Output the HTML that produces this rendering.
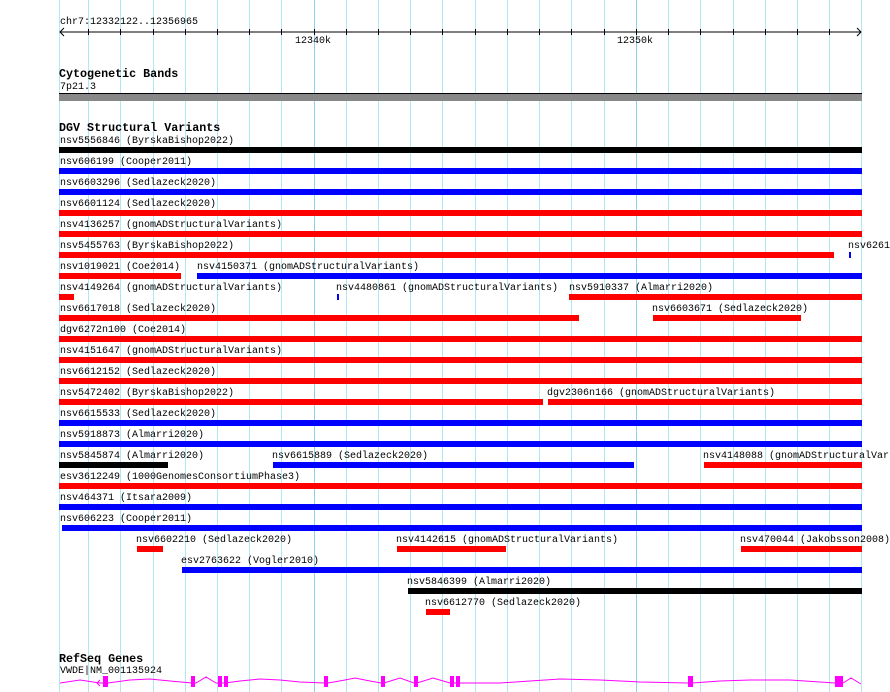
<!DOCTYPE html>
<html><head><meta charset="utf-8"><style>
html,body{margin:0;padding:0;background:#fff;}
body{width:890px;height:692px;position:relative;overflow:hidden;font-family:"Liberation Mono","DejaVu Sans Mono",monospace;font-size:10px;color:#000;}
.g{position:absolute;top:0;height:692px;width:1px;background:#b0e8f2;}
.gm{background:#8dd2ec;}
.t{position:absolute;white-space:nowrap;line-height:10px;margin-top:2px;}
.b{position:absolute;height:6px;}
.r{background:#f00;}.u{background:#00f;}.k{background:#000;}
.h{font-weight:bold;font-size:11.7px;}
</style></head><body>
<div class="g" style="left:59px"></div><div class="g" style="left:88px"></div><div class="g" style="left:120px"></div><div class="g" style="left:153px"></div><div class="g" style="left:185px"></div><div class="g" style="left:217px"></div><div class="g" style="left:249px"></div><div class="g" style="left:281px"></div><div class="g gm" style="left:314px"></div><div class="g" style="left:346px"></div><div class="g" style="left:378px"></div><div class="g" style="left:410px"></div><div class="g" style="left:442px"></div><div class="g" style="left:475px"></div><div class="g" style="left:507px"></div><div class="g" style="left:539px"></div><div class="g" style="left:571px"></div><div class="g" style="left:604px"></div><div class="g gm" style="left:636px"></div><div class="g" style="left:668px"></div><div class="g" style="left:700px"></div><div class="g" style="left:733px"></div><div class="g" style="left:765px"></div><div class="g" style="left:797px"></div><div class="g" style="left:829px"></div><div class="g" style="left:861px"></div>

<svg style="position:absolute;left:0;top:0" width="890" height="60">
<line x1="60" y1="32" x2="861" y2="32" stroke="#000"/>
<polyline points="64,28 60,32 64,36" fill="none" stroke="#000"/>
<polyline points="857,28 861,32 857,36" fill="none" stroke="#000"/>
<g stroke="#000">
<line x1="88.5" y1="29" x2="88.5" y2="35"/><line x1="120.5" y1="29" x2="120.5" y2="35"/><line x1="153.5" y1="29" x2="153.5" y2="35"/><line x1="185.5" y1="29" x2="185.5" y2="35"/><line x1="217.5" y1="29" x2="217.5" y2="35"/><line x1="249.5" y1="29" x2="249.5" y2="35"/><line x1="281.5" y1="29" x2="281.5" y2="35"/><line x1="314.5" y1="29" x2="314.5" y2="35"/><line x1="346.5" y1="29" x2="346.5" y2="35"/><line x1="378.5" y1="29" x2="378.5" y2="35"/><line x1="410.5" y1="29" x2="410.5" y2="35"/><line x1="442.5" y1="29" x2="442.5" y2="35"/><line x1="475.5" y1="29" x2="475.5" y2="35"/><line x1="507.5" y1="29" x2="507.5" y2="35"/><line x1="539.5" y1="29" x2="539.5" y2="35"/><line x1="571.5" y1="29" x2="571.5" y2="35"/><line x1="604.5" y1="29" x2="604.5" y2="35"/><line x1="636.5" y1="29" x2="636.5" y2="35"/><line x1="668.5" y1="29" x2="668.5" y2="35"/><line x1="700.5" y1="29" x2="700.5" y2="35"/><line x1="733.5" y1="29" x2="733.5" y2="35"/><line x1="765.5" y1="29" x2="765.5" y2="35"/><line x1="797.5" y1="29" x2="797.5" y2="35"/><line x1="829.5" y1="29" x2="829.5" y2="35"/>
</g></svg>
<div class="t" style="left:60px;top:16px">chr7:12332122..12356965</div>
<div class="t" style="left:295px;top:35px">12340k</div>
<div class="t" style="left:617px;top:35px">12350k</div>

<div class="t h" style="left:59px;top:67px">Cytogenetic Bands</div>
<div class="t" style="left:60px;top:81px">7p21.3</div>
<div style="position:absolute;left:59px;top:93px;width:803px;height:7px;background:#888;border-top:1px solid #000;"></div>

<div class="t h" style="left:59px;top:121px">DGV Structural Variants</div>

<div class="t" style="left:60px;top:135px">nsv5556846 (ByrskaBishop2022)</div><div class="b k" style="left:59px;top:147px;width:803px"></div>
<div class="t" style="left:60px;top:156px">nsv606199 (Cooper2011)</div><div class="b u" style="left:59px;top:168px;width:803px"></div>
<div class="t" style="left:60px;top:177px">nsv6603296 (Sedlazeck2020)</div><div class="b u" style="left:59px;top:189px;width:803px"></div>
<div class="t" style="left:60px;top:198px">nsv6601124 (Sedlazeck2020)</div><div class="b r" style="left:59px;top:210px;width:803px"></div>
<div class="t" style="left:60px;top:219px">nsv4136257 (gnomADStructuralVariants)</div><div class="b r" style="left:59px;top:231px;width:803px"></div>
<div class="t" style="left:60px;top:240px">nsv5455763 (ByrskaBishop2022)</div><div class="b r" style="left:59px;top:252px;width:775px"></div>
<div class="t" style="left:848px;top:240px">nsv6261</div><div class="b u" style="left:849px;top:252px;width:2px"></div>
<div class="t" style="left:60px;top:261px">nsv1019021 (Coe2014)</div><div class="b r" style="left:59px;top:273px;width:122px"></div>
<div class="t" style="left:197px;top:261px">nsv4150371 (gnomADStructuralVariants)</div><div class="b u" style="left:197px;top:273px;width:665px"></div>
<div class="t" style="left:60px;top:282px">nsv4149264 (gnomADStructuralVariants)</div><div class="b r" style="left:59px;top:294px;width:15px"></div>
<div class="t" style="left:336px;top:282px">nsv4480861 (gnomADStructuralVariants)</div><div class="b u" style="left:337px;top:294px;width:2px"></div>
<div class="t" style="left:569px;top:282px">nsv5910337 (Almarri2020)</div><div class="b r" style="left:569px;top:294px;width:293px"></div>
<div class="t" style="left:60px;top:303px">nsv6617018 (Sedlazeck2020)</div><div class="b r" style="left:59px;top:315px;width:520px"></div>
<div class="t" style="left:652px;top:303px">nsv6603671 (Sedlazeck2020)</div><div class="b r" style="left:653px;top:315px;width:148px"></div>
<div class="t" style="left:60px;top:324px">dgv6272n100 (Coe2014)</div><div class="b r" style="left:59px;top:336px;width:803px"></div>
<div class="t" style="left:60px;top:345px">nsv4151647 (gnomADStructuralVariants)</div><div class="b r" style="left:59px;top:357px;width:803px"></div>
<div class="t" style="left:60px;top:366px">nsv6612152 (Sedlazeck2020)</div><div class="b r" style="left:59px;top:378px;width:803px"></div>
<div class="t" style="left:60px;top:387px">nsv5472402 (ByrskaBishop2022)</div><div class="b r" style="left:59px;top:399px;width:484px"></div>
<div class="t" style="left:547px;top:387px">dgv2306n166 (gnomADStructuralVariants)</div><div class="b r" style="left:548px;top:399px;width:314px"></div>
<div class="t" style="left:60px;top:408px">nsv6615533 (Sedlazeck2020)</div><div class="b u" style="left:59px;top:420px;width:803px"></div>
<div class="t" style="left:60px;top:429px">nsv5918873 (Almarri2020)</div><div class="b u" style="left:59px;top:441px;width:803px"></div>
<div class="t" style="left:60px;top:450px">nsv5845874 (Almarri2020)</div><div class="b k" style="left:59px;top:462px;width:109px"></div>
<div class="t" style="left:272px;top:450px">nsv6615889 (Sedlazeck2020)</div><div class="b u" style="left:273px;top:462px;width:361px"></div>
<div class="t" style="left:703px;top:450px">nsv4148088 (gnomADStructuralVar</div><div class="b r" style="left:704px;top:462px;width:158px"></div>
<div class="t" style="left:60px;top:471px">esv3612249 (1000GenomesConsortiumPhase3)</div><div class="b r" style="left:59px;top:483px;width:803px"></div>
<div class="t" style="left:60px;top:492px">nsv464371 (Itsara2009)</div><div class="b u" style="left:59px;top:504px;width:803px"></div>
<div class="t" style="left:60px;top:513px">nsv606223 (Cooper2011)</div><div class="b u" style="left:62px;top:525px;width:800px"></div>
<div class="t" style="left:136px;top:534px">nsv6602210 (Sedlazeck2020)</div><div class="b r" style="left:137px;top:546px;width:26px"></div>
<div class="t" style="left:396px;top:534px">nsv4142615 (gnomADStructuralVariants)</div><div class="b r" style="left:397px;top:546px;width:109px"></div>
<div class="t" style="left:740px;top:534px">nsv470044 (Jakobsson2008)</div><div class="b r" style="left:741px;top:546px;width:121px"></div>
<div class="t" style="left:181px;top:555px">esv2763622 (Vogler2010)</div><div class="b u" style="left:182px;top:567px;width:680px"></div>
<div class="t" style="left:407px;top:576px">nsv5846399 (Almarri2020)</div><div class="b k" style="left:408px;top:588px;width:454px"></div>
<div class="t" style="left:425px;top:597px">nsv6612770 (Sedlazeck2020)</div><div class="b r" style="left:426px;top:609px;width:24px"></div>

<div class="t h" style="left:59px;top:652px">RefSeq Genes</div>
<div class="t" style="left:60px;top:665px">VWDE|NM_001135924</div>
<svg style="position:absolute;left:0;top:670px" width="890" height="22">
<polyline fill="none" stroke="#f0f" stroke-width="1" points="60,13 80,10 100,13 108,13 130,10 150,9 170,11 192,13 196,13 206,7 216,13 219,13 225,13 240,11 260,9 280,10 300,12 325,13 328,13 345,10 355,8 370,11 381,13 384,13 400,8 414,13 417,13 433,8 450,13 459,13 500,13 530,11 560,9 600,10 640,12 688,13 692,13 720,11 750,10 790,10 820,12 835,13 843,13 851,8 861,14"/>
<g fill="#f0f">
<rect x="103" y="6" width="5" height="11"/><rect x="191" y="6" width="4" height="11"/><rect x="218" y="6" width="4" height="11"/><rect x="224" y="6" width="4" height="11"/><rect x="324" y="6" width="4" height="11"/><rect x="381" y="6" width="4" height="11"/><rect x="414" y="6" width="4" height="11"/><rect x="450" y="6" width="4" height="11"/><rect x="456" y="6" width="4" height="11"/><rect x="688" y="6" width="5" height="11"/><rect x="835" y="6" width="8" height="11"/>
</g>
<polyline points="100,10 97,13 100,16" fill="none" stroke="#f0f"/>
</svg>
</body></html>
